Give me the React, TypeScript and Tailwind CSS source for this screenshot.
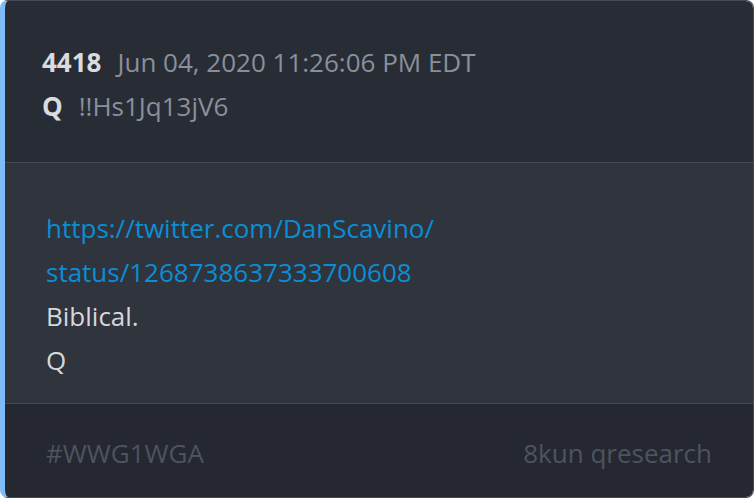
export default function App() {
  return (
    <div className="h-[498px] w-[754px] bg-white font-['Open_Sans',sans-serif]">
      <div className="flex h-full flex-col overflow-hidden rounded-lg border border-l-[5px] border-[#454a55] border-l-[#7fbcf7] text-[26px] leading-[44px]">
        <header className="bg-[#282c35] pb-[34px] pl-[37px] pt-[39px]">
          <div className="flex items-baseline gap-[16px]">
            <span className="font-bold text-[#d9dbdf]">4418</span>
            <span className="text-[#8a8f9b]">Jun 04, 2020 11:26:06 PM EDT</span>
          </div>
          <div className="flex items-baseline gap-[16px]">
            <span className="font-bold text-[#d9dbdf]">Q</span>
            <span className="text-[#8a8f9b]">!!Hs1Jq13jV6</span>
          </div>
        </header>
        <main className="border-t border-[#454a55] bg-[#2f343d] pb-[21px] pl-[41px] pt-[43px] text-[#d6d8dc]">
          <a className="block text-[#0a8ed6]">https://twitter.com/DanScavino/</a>
          <a className="block text-[#0a8ed6]">status/1268738637333700608</a>
          <p>Biblical.</p>
          <p>Q</p>
        </main>
        <footer className="flex flex-1 items-center justify-between border-t border-[#454a55] bg-[#252830] pl-[41px] pr-[41px] pt-[4px] text-[#4e535e]">
          <span>#WWG1WGA</span>
          <span>8kun qresearch</span>
        </footer>
      </div>
    </div>
  );
}
